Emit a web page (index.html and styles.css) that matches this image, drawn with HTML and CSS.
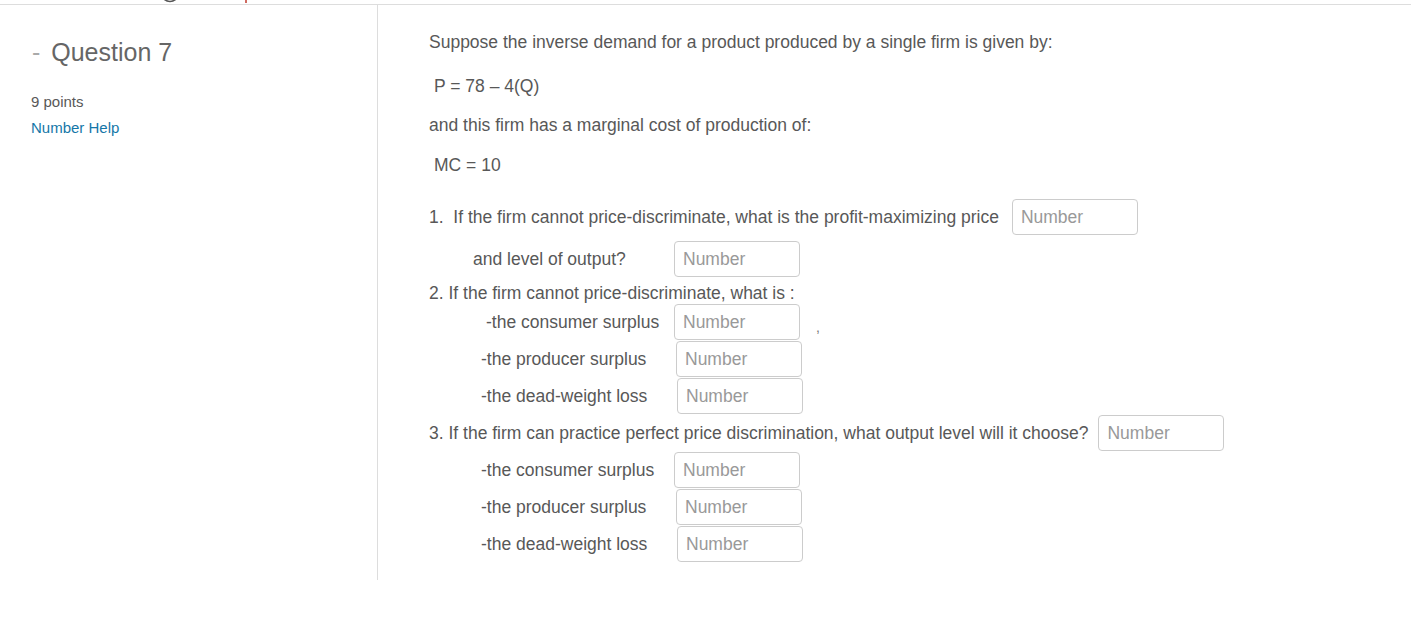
FILE: index.html
```html
<!DOCTYPE html>
<html>
<head>
<meta charset="utf-8">
<link rel="stylesheet" href="styles.css">
</head>
<body>
<div class="topbar">
  <svg class="topmark" width="120" height="5" viewBox="0 0 120 5"><path d="M0 -5 Q10 8 20 -5" fill="none" stroke="#555" stroke-width="1.6"/><path d="M86 0 V3" stroke="#c0392b" stroke-width="1.5"/></svg>
</div>
<div class="wrap">
  <div class="sidebar">
    <div class="qtitle"><span class="dash">-</span> Question 7</div>
    <div class="points">9 points</div>
    <a class="help" href="#">Number Help</a>
  </div>
  <div class="main">
    <p class="intro">Suppose the inverse demand for a product produced by a single firm is given by:</p>
    <p class="formula f1">P = 78 – 4(Q)</p>
    <p class="text t2">and this firm has a marginal cost of production of:</p>
    <p class="formula f2">MC = 10</p>
    <div class="row q1"><span class="qtext">1.&nbsp; If the firm cannot price-discriminate, what is the profit-maximizing price</span><input class="num g13" placeholder="Number"></div>
    <div class="row sub r0"><span class="lbl w201">and level of output?</span><input class="num" placeholder="Number"></div>
    <div class="qline">2. If the firm cannot price-discriminate, what is :</div>
    <div class="row sub r1"><span class="lbl w188">-the consumer surplus</span><input class="num" placeholder="Number"><span class="comma">,</span></div>
    <div class="row sub r2"><span class="lbl w195">-the producer surplus</span><input class="num" placeholder="Number"></div>
    <div class="row sub r2"><span class="lbl w196">-the dead-weight loss</span><input class="num" placeholder="Number"></div>
    <div class="row q3"><span class="qtext">3. If the firm can practice perfect price discrimination, what output level will it choose?</span><input class="num g10" placeholder="Number"></div>
    <div class="row sub r2"><span class="lbl w193">-the consumer surplus</span><input class="num" placeholder="Number"></div>
    <div class="row sub r2"><span class="lbl w195">-the producer surplus</span><input class="num" placeholder="Number"></div>
    <div class="row sub r2"><span class="lbl w196">-the dead-weight loss</span><input class="num" placeholder="Number"></div>
  </div>
</div>
</body>
</html>
```

FILE: styles.css
```css
* { box-sizing: border-box; }
body {
  margin: 0;
  font-family: "Liberation Sans", Arial, sans-serif;
  color: #585858;
  background: #fff;
}
.topbar {
  height: 5px;
  border-bottom: 1px solid #ddd;
  overflow: hidden;
}
.topmark { display: block; margin-left: 160px; }
.wrap { display: flex; }
.sidebar {
  width: 378px;
  height: 575px;
  border-right: 1px solid #ddd;
  padding: 33px 0 0 31px;
}
.qtitle {
  font-size: 25px;
  line-height: 29px;
  color: #666;
}
.dash { color: #aaa; margin-left: 1px; margin-right: 4px; }
.points {
  margin-top: 26px;
  font-size: 15px;
  line-height: 18px;
  color: #585858;
}
.help {
  display: block;
  margin-top: 8px;
  font-size: 15px;
  line-height: 18px;
  color: #1577a8;
  text-decoration: none;
}
.main { padding-left: 51px; flex: 1; }
p { margin: 0; }
.intro { margin-top: 25px; font-size: 17.5px; line-height: 24px; }
.formula { font-size: 17.5px; line-height: 24px; padding-left: 5px; }
.f1 { margin-top: 20px; }
.t2 { margin-top: 15px; font-size: 17.5px; line-height: 24px; }
.f2 { margin-top: 16px; }
.row {
  display: flex;
  align-items: center;
  height: 37px;
  font-size: 17.5px;
}
.row .num { align-self: flex-start; }
.q1 { margin-top: 22px; height: 36px; }
.r0 { margin-top: 6px; height: 36px; }
.qline { margin-top: 5px; font-size: 17.5px; line-height: 22px; }
.sub { padding-left: 44px; }
.r1 .lbl { margin-left: 13px; }
.r2 { padding-left: 52px; }
.r0 { padding-left: 44px; }
.lbl { display: inline-block; flex: none; }
.w201 { width: 201px; }
.w188 { width: 188px; }
.w193 { width: 193px; }
.w195 { width: 195px; }
.w196 { width: 196px; }
.num {
  width: 126px;
  height: 36px;
  border: 1px solid #ccc;
  border-radius: 4px;
  padding: 0 8px;
  font-family: "Liberation Sans", Arial, sans-serif;
  font-size: 17.5px;
  color: #555;
  background: #fff;
  outline: none;
}
.num::placeholder { color: #999; }
.g13 { margin-left: 13px; }
.g10 { margin-left: 10px; }
.comma { margin-left: 16px; margin-top: 8px; font-size: 14px; color: #777; }
```
